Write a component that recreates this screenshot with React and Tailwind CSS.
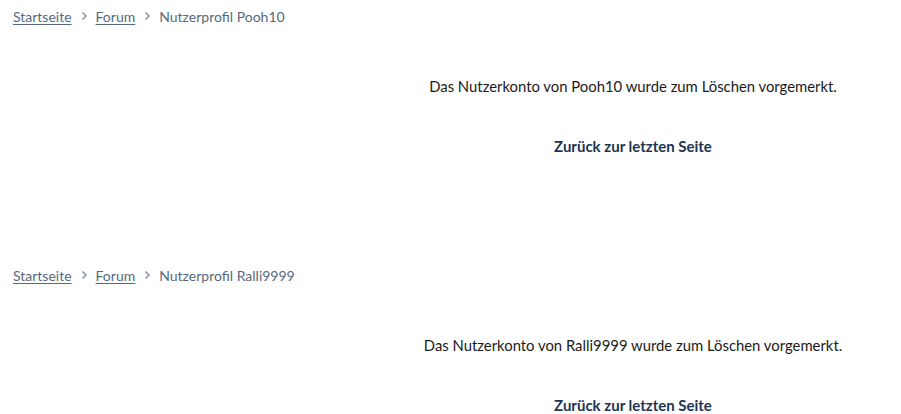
import React from "react";

function Chevron() {
  return (
    <svg width="8" height="10" viewBox="0 0 8 10" className="mx-[8px] shrink-0" aria-hidden="true">
      <path d="M2.5 1.5 L6 5 L2.5 8.5" fill="none" stroke="#8a97a4" strokeWidth="1.6" />
    </svg>
  );
}

function Block({ name }) {
  return (
    <section className="h-[259px] px-[13px]">
      <nav className="flex items-center h-[32px] text-[14px] text-[#56697c]">
        <a href="#" className="underline underline-offset-2 decoration-[#56697c]">Startseite</a>
        <Chevron />
        <a href="#" className="underline underline-offset-2 decoration-[#56697c]">Forum</a>
        <Chevron />
        <span>Nutzerprofil {name}</span>
      </nav>
      <div className="flex">
        <div className="w-[365px] shrink-0" />
        <div className="flex-1 flex flex-col items-center">
          <p className="mt-[43px] text-[14.85px] text-[#1b1b1b] leading-[22px]">
            Das Nutzerkonto von {name} wurde zum Löschen vorgemerkt.
          </p>
          <a href="#" className="mt-[38px] text-[15px] font-bold text-[#1d3452] leading-[22px]">
            Zurück zur letzten Seite
          </a>
        </div>
      </div>
    </section>
  );
}

export default function App() {
  return (
    <div className="bg-white w-[901px] h-[414px] overflow-hidden" style={{ fontFamily: "Lato, 'Open Sans', sans-serif" }}>
      <Block name="Pooh10" />
      <Block name="Ralli9999" />
    </div>
  );
}
